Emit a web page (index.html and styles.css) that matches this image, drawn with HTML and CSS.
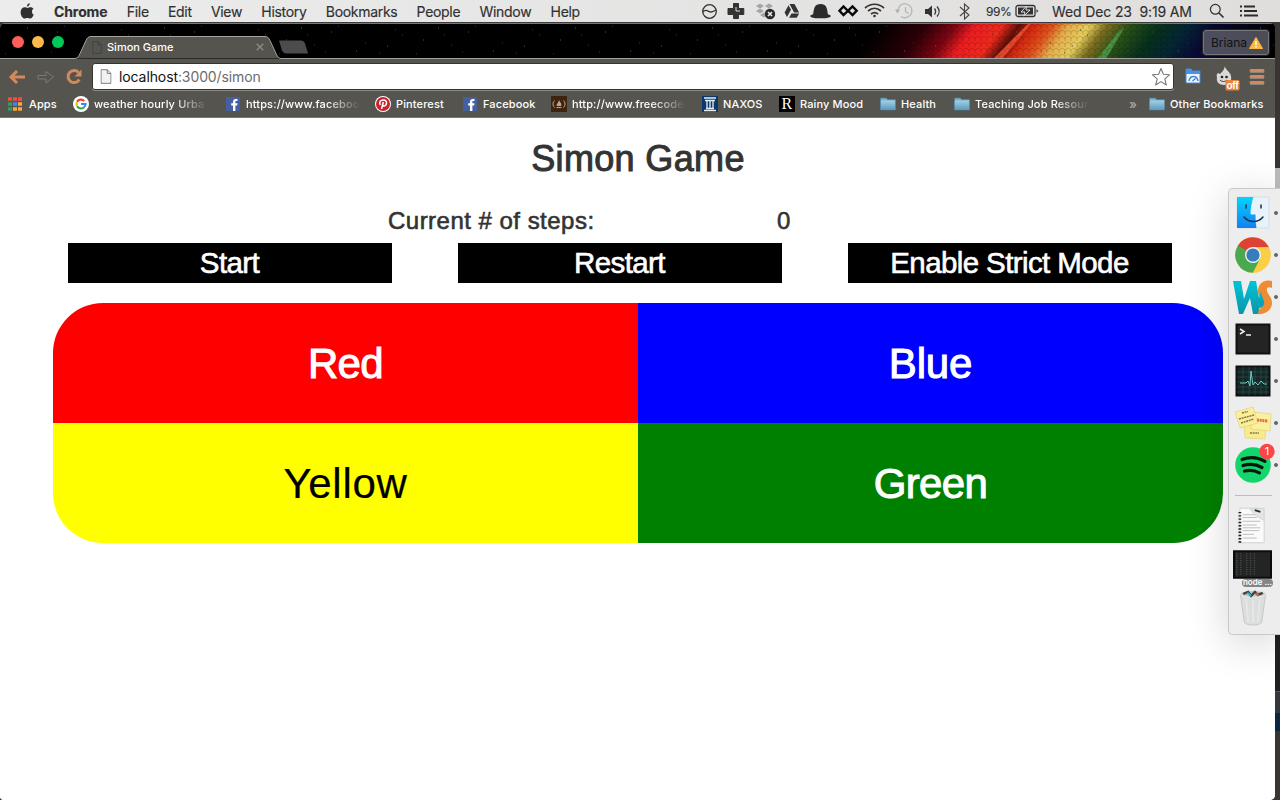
FILE: index.html
```html
<!DOCTYPE html>
<html lang="en">
<head>
<meta charset="utf-8">
<title>Simon Game</title>
<link rel="stylesheet" href="styles.css">
</head>
<body>
<svg width="0" height="0" class="defs">
  <defs>
    <linearGradient id="folderFill" x1="0" y1="0" x2="0" y2="1"><stop offset="0" stop-color="#a5d0e6"/><stop offset="1" stop-color="#5b9abd"/></linearGradient>
    <symbol id="folder" viewBox="0 0 16 16"><path d="M.5 3V2h6l1 1.500h8V14H.5z" fill="#79b0ce" stroke="#477d9c" stroke-width=".6"/><path d="M.8 4.500h14.400v9.200H.8z" fill="url(#folderFill)"/></symbol>
    <symbol id="fb" viewBox="0 0 16 16"><rect x="1" y="1" width="14" height="14" fill="#4460a0"/><path d="M8 15V9.500H6.200V7.300H8V5.800C8 3.900 9.200 3 10.800 3h1.700v2.100h-1.200c-.7 0-.9.400-.9 1v1.200h2.100l-.3 2.200h-1.800V15z" fill="#fff"/></symbol>
    <symbol id="page" viewBox="0 0 12 16"><path d="M.7.700h6.600l4 4v10.600H.7z"/><path d="M7.300.700v4h4" fill="none"/></symbol>
  </defs>
</svg>

<header class="menubar">
  <svg class="apple" width="14" height="16" viewBox="0 0 14 16"><path d="M9.800.200c.1 1.800-1.300 3.300-2.900 3.300C6.700 1.900 8.200.400 9.800.200zM12 8.400c0-1.600 1.200-2.400 1.500-2.600-1-1.400-2.300-1.600-2.900-1.600-1.300 0-2.300.7-3 .7S5.900 4.200 4.900 4.200C2.600 4.300.6 6 .6 9.200c0 3.300 2.300 6.400 3.900 6.400 1.100 0 1.500-.7 2.900-.7s1.700.7 2.800.7c1.500 0 2.900-2.200 3.500-4-1.200-.5-1.700-1.700-1.700-3.200z"/></svg>
  <nav class="menus"><b>Chrome</b><span>File</span><span>Edit</span><span>View</span><span>History</span><span>Bookmarks</span><span>People</span><span>Window</span><span>Help</span></nav>
  <svg class="status" width="280" height="22" viewBox="0 0 280 22">
    <g fill="none" stroke="#333" stroke-width="1.300">
      <circle cx="9.500" cy="11.500" r="6.800"/><path d="M3 12c3-4 5 0 8 0 2 0 3-1 5-2"/>
    </g>
    <path d="M33.500 3.500h5v5h5.300v6h-5.300V18.500h-5v-4H28v-6h5.500z" fill="#333" stroke="#333" stroke-linejoin="round"/>
    <path d="M36 7v4h4" stroke="#ddd" fill="none"/>
    <path d="M56 6l4-2.500L64 6l-4 2.500zm9 0l4-2.500L73 6l-4 2.500zm-9 5l4-2.500 4 2.500-4 2.500zm9 0l4-2.500 4 2.500-4 2.500zM60 15l4-2.500 4 2.500-4 2.500z" fill="#a5a5a5"/>
    <circle cx="70" cy="14" r="5.200" fill="#292929"/><path d="M68 12l4 4m0-4l-4 4" stroke="#eee" stroke-width="1.500"/>
    <path d="M89.500 4h5l4.600 8.500h-5zM88.500 5.200l2.500 4.600-4 7.300-2.400-4.600zM91.500 13.500h7.700l-2.500 4.200h-7.600z" fill="#333"/>
    <path d="M110 16c1-1 2.500-1.500 3.200-2 .7-6 1.500-10 7.300-10s6.700 4 7.300 10c.7.500 2.200 1 3.200 2-1.500 2.500-6 2.200-10.500 2.200S111.500 18.500 110 16z" fill="#2b2b2b"/>
    <path d="M147.500 10.500L143.500 6.500 139.500 10.700l4 4.300 9-8.500 4.200 4.200-4.200 4.300-4-4M147.500 10.500l-.8-.8M148.500 11l.8.800" fill="none" stroke="#080808" stroke-width="2.400"/>
    <g fill="none" stroke="#333" stroke-width="1.700"><path d="M165 8c5.500-5 13.500-5 19 0M168 11c4-3.500 9-3.500 13 0M171 14c2.400-2 4.700-2 7 0"/></g><circle cx="174.500" cy="16" r="1.300" fill="#333"/>
    <g fill="none" stroke="#b7b7b7" stroke-width="1.300"><path d="M198 11.500a7 7 0 1 1 3 5M205.500 7v4.500l3 2"/></g><path d="M195 9.500h5l-2.500 4z" fill="#b0b0b0"/>
    <path d="M225 9h3l4-3.500v12L228 14h-3z" fill="#333"/><path d="M234.500 8.500c1.500 2 1.500 4 0 6M237 6.500c2.700 3 2.700 7 0 10" stroke="#333" fill="none" stroke-width="1.300"/>
    <path d="M260 7l9 8-4.500 4V4l4.500 4-9 8" fill="none" stroke="#444" stroke-width="1.100"/>
  </svg>
  <span class="percent">99%</span>
  <svg class="battery" width="24" height="14" viewBox="0 0 24 14"><rect x="1" y="1.500" width="19" height="11" rx="2" fill="none" stroke="#333" stroke-width="1.300"/><path d="M3 3.500h15v7H3z" fill="#333"/><path d="M11.500 2L6 8h4l-1.200 4L15 6h-4z" fill="#333" stroke="#ddd"/><path d="M21.500 5v4l1.800-2z" fill="#333"/></svg>
  <span class="clock">Wed Dec 23&nbsp; 9:19 AM</span>
  <svg class="search" width="16" height="16" viewBox="0 0 16 16" fill="none" stroke="#333"><circle cx="6.300" cy="6.300" r="4.900" stroke-width="1.300"/><path d="M10 10l4.500 4.500" stroke-width="1.700"/></svg>
  <svg class="list" width="18" height="12" viewBox="0 0 18 12"><path d="M0 1.500h2M0 6h2M0 10.500h2M4 1.500h11M4 6h13M4 10.500h14" stroke="#2c2c2c" stroke-width="1.800"/></svg>
</header>

<div class="desktop">
  <section class="window">
    <div class="tabstrip">
      <svg class="theme" width="1275" height="36" viewBox="0 0 1275 36">
        <defs>
          <linearGradient id="aurora" gradientUnits="userSpaceOnUse" x1="880" y1="0" x2="1100" y2="160">
            <stop offset="0" stop-color="#000"/><stop offset=".14" stop-color="#2c0007"/><stop offset=".23" stop-color="#7c0512"/><stop offset=".29" stop-color="#ed1c20"/><stop offset=".37" stop-color="#f02a1c"/><stop offset=".42" stop-color="#5e0f08"/><stop offset=".46" stop-color="#d5250e"/><stop offset=".52" stop-color="#e0531d"/><stop offset=".57" stop-color="#e6b04c"/><stop offset=".63" stop-color="#e4cc5c"/><stop offset=".68" stop-color="#7d6e1e"/><stop offset=".75" stop-color="#2a5018"/><stop offset=".84" stop-color="#05301c"/><stop offset=".92" stop-color="#042634"/><stop offset="1" stop-color="#080a38"/><stop offset="1.000" stop-color="#080a38"/>
          </linearGradient>
          <linearGradient id="night"><stop stop-color="#000" stop-opacity="0"/><stop offset="1" stop-color="#000"/></linearGradient>
          <pattern id="hex" width="6" height="6" patternUnits="userSpaceOnUse"><path d="M0 1l3 2 3-2M3 3v3" fill="none" stroke="#000" stroke-opacity=".25" stroke-width=".7"/></pattern>
          <pattern id="stars" width="137" height="35" patternUnits="userSpaceOnUse"><path d="M12 17h1M27 5h1M57 9h1M82 28h1M113 23h1" stroke="#555"/><path d="M5 31h1M33 12h1M51 29h1M64 3h1M91 20h1M105 30h1M121 7h1M40 22h1M128 12h1" stroke="#333"/></pattern>
        </defs>
        <rect width="1275" height="36" fill="#000"/>
        <path d="M850 0h425v36H850z" fill="url(#aurora)"/>
        <path d="M1195 0h80v36h-80z" fill="url(#night)"/>
        <path d="M993 36l36-36h3l-30 36z" fill="#ff5436" opacity=".8"/>
        <path d="M1097 36l22-28 5-3-18 31z" fill="#4ca54b" opacity=".75"/>
        <path d="M860 0h370v36H860z" fill="url(#hex)"/>
        <rect width="1275" height="36" fill="url(#stars)"/>
        <path d="M0 .5h1275" stroke="#777"/>
        <circle cx="18" cy="19" r="6" fill="#ff5f58"/><circle cx="38" cy="19" r="6" fill="#ffb94b"/><circle cx="58" cy="19" r="6" fill="#00c957"/>
        <path d="M0 35.500h75c3 0 4-3 5-5l6-13c1-2 2-4 5-4h174c3 0 4 2 5 4l6 13c1 2 2 5 5 5h994" fill="#55544e" stroke="#a3a29d"/>
        <path d="M279 17.500h22c2 0 3 1 4 3l3 10h-21c-3 0-4-1-5-3z" fill="#4c4c4c"/>
      </svg>
      <div class="tab">
        <svg width="10" height="13" viewBox="0 0 12 16" fill="none" stroke="#403f3a"><use href="#page"/></svg>
        <span>Simon Game</span>
        <svg width="8" height="8" viewBox="0 0 8 8"><path d="M.7.700l6.600 6.600m0-6.600L.7 7.300" stroke="#8b8a86" stroke-width="1.400"/></svg>
      </div>
      <div class="profile"><span>Briana</span><svg width="14" height="12" viewBox="0 0 14 12"><path d="M7 .5L13.500 11.500H.5z" fill="#ffb83d" stroke="#ffb83d" stroke-linejoin="round"/><path d="M7 4v4M7 9v1.500" stroke="#fff" stroke-width="1.400"/></svg></div>
    </div>
    <div class="toolbar">
      <svg width="76" height="20" viewBox="0 0 76 20">
        <path d="M9 4L3 10l6 6M4 10h13" fill="none" stroke="#d28a5a" stroke-width="3"/>
        <path d="M30 8.500h8V4.500l7.500 5.500-7.500 6v-4h-8z" fill="none" stroke="#7b7a76" stroke-width="1"/>
        <path d="M70.500 5.500a6 6 0 1 0 .8 7" fill="none" stroke="#d28a5a" stroke-width="3"/><path d="M73.500 2.500v7h-7z" fill="#d28a5a"/>
      </svg>
      <div class="omnibox">
        <svg width="12" height="15" viewBox="0 0 12 16" fill="#f1f1f1" stroke="#777"><use href="#page"/></svg>
        <span class="url"><em>localhost</em>:3000/simon</span>
        <svg width="20" height="20" viewBox="0 0 20 20"><path d="M10 1.500l2.400 5.800 6.100.5-4.700 4 1.500 6.200-5.300-3.400L4.700 18l1.500-6.200-4.700-4 6.100-.5z" fill="#fff" stroke="#777" stroke-width="1.100" stroke-linejoin="round"/></svg>
      </div>
      <svg class="extensions" width="90" height="28" viewBox="0 0 90 28">
        <path d="M1 6h5l1 2h8v12H1z" fill="#f0f5fa" stroke="#4188da"/><path d="M1 6h5l1 2h8v3H1z" fill="#4a91e6"/><path d="M4 18c1-6 8-6 9 0M7.500 18l3-2.500" fill="none" stroke="#4387d4" stroke-width="1.500"/>
        <path d="M40 3c0 4 5 5 6 10 1 6-2 9-7 9s-8-3-7-8c-1-2 0-3 1-4l2 1c3-3 4-4 5-8z" fill="#d9d9d7"/><circle cx="37" cy="14" r="1.300" fill="#222"/><circle cx="41.500" cy="14" r="1.300" fill="#222"/><path d="M35 17c2 2 5 2 7 0" fill="none" stroke="#333"/>
        <rect x="40.500" y="17" width="14" height="10.500" rx="1.500" fill="#e8833a"/><text x="41.500" y="26" class="badge">off</text>
        <path d="M66 7.500h12M66 13.500h12M66 19.500h12" stroke="#d28a5a" stroke-width="3" stroke-linecap="round"/><path d="M65 9.500h14M65 15.500h14M65 21.500h14" stroke="#888580"/>
      </svg>
    </div>
    <nav class="bookmarks">
      <a><svg width="14" height="14" viewBox="0 0 14 14"><path d="M0 2h4M5 2h4M10 2h4" stroke="#f44b43" stroke-width="3.500"/><path d="M0 7h4" stroke="#29a05b" stroke-width="3.500"/><path d="M5 7h4" stroke="#3889ef" stroke-width="3.500"/><path d="M10 7h4M10 12h4M5 12h4" stroke="#f8a83d" stroke-width="3.500"/><path d="M0 12h4" stroke="#29a05b" stroke-width="3.500"/></svg><span>Apps</span></a>
      <a><svg width="16" height="16" viewBox="0 0 16 16" fill="none" stroke-width="2.200"><circle cx="8" cy="8" r="8" fill="#fff"/><path d="M11.200 4.900A4.500 4.500 0 0 0 4.100 5.800" stroke="#ea4335"/><path d="M4.100 5.800a4.500 4.500 0 0 0 0 4.400" stroke="#fbbc05"/><path d="M4.100 10.200a4.500 4.500 0 0 0 6.700 1.300" stroke="#34a853"/><path d="M10.800 11.500A4.500 4.500 0 0 0 12.500 8H8" stroke="#4285f4"/></svg><span class="fade">weather hourly Urba</span></a>
      <a><svg width="16" height="16"><use href="#fb"/></svg><span class="fade">https://www.faceboo</span></a>
      <a><svg width="16" height="16" viewBox="0 0 16 16"><circle cx="8" cy="8" r="8" fill="#fff"/><circle cx="8" cy="8" r="7" fill="#c8232c"/><path d="M5.300 9C3.600 5.800 5.800 3.900 8.200 3.900c2.400 0 3.600 1.500 3.300 3.400-.4 2.600-2.800 3.300-3.800 2M8.300 6L6.500 13" fill="none" stroke="#fff" stroke-width="1.500"/></svg><span>Pinterest</span></a>
      <a><svg width="16" height="16"><use href="#fb"/></svg><span>Facebook</span></a>
      <a><svg width="16" height="16" viewBox="0 0 16 16"><path d="M0 0h16v16H0z" fill="#40230f"/><path d="M3.500 4.500c-2 2-2 5 0 7M12.500 4.500c2 2 2 5 0 7M5.500 11.500h5" fill="none" stroke="#b9a794"/><path d="M8 4c.5 2 3 3 2.200 6H5.800C5 8 7.500 7 8 4z" fill="#b9a794"/></svg><span class="fade">http://www.freecodec</span></a>
      <a><svg width="16" height="16" viewBox="0 0 16 16"><path d="M0 0h16v16H0z" fill="#0c396c"/><path d="M2 2h12M3 4.500h10M2 14.500h12M4 12.500h8M5 5v7M8 5v7M11 5v7" stroke="#e6eef5" stroke-width="1.300"/></svg><span>NAXOS</span></a>
      <a><span class="rainy-icon">R</span><span>Rainy Mood</span></a>
      <a><svg width="16" height="16"><use href="#folder"/></svg><span>Health</span></a>
      <a><svg width="16" height="16"><use href="#folder"/></svg><span class="fade">Teaching Job Resour</span></a>
      <a class="more">»</a>
      <a><svg width="16" height="16"><use href="#folder"/></svg><span>Other Bookmarks</span></a>
    </nav>
    <main class="page">
      <h1>Simon Game</h1>
      <div class="steps"><span>Current # of steps:</span><span>0</span></div>
      <div class="controls"><button>Start</button><button>Restart</button><button>Enable Strict Mode</button></div>
      <div class="board"><div class="pad red">Red</div><div class="pad blue">Blue</div><div class="pad yellow">Yellow</div><div class="pad green">Green</div></div>
    </main>
  </section>
  <div class="behind"><i class="grey"></i><i class="black"></i><i class="slate"></i><i class="navy"></i></div>

  <aside class="dock">
    <svg class="running" viewBox="0 0 44 36"><defs><linearGradient id="finder" x1="0" y1="0" x2="0" y2="1"><stop stop-color="#04d4fd"/><stop offset="1" stop-color="#1480f0"/></linearGradient></defs><rect x="2" y="2" width="32" height="31" rx="1" fill="#e8f2fb" stroke="#c5d0da" stroke-width=".6"/><path d="M2 2h17c-2 6-3 11-3 17h5c0 5 0 9 1 14H2z" fill="url(#finder)"/><path d="M19 2c-2 6-3 11-3 17h5c0 5 0 9 1 14" fill="none" stroke="#fff" stroke-width=".8"/><path d="M11 10v3M26 10v3M9 22c5 6 14 6 19 0" stroke="#17304a" stroke-width="1.500" fill="none" stroke-linecap="round"/></svg>
    <svg class="running" viewBox="0 0 44 36"><circle cx="18" cy="18" r="17.800" fill="#fbcf45"/><path d="M18 18L2.600 9A17.800 17.800 0 0 1 33.500 9.500L34 10.500H18z" fill="#dc4335"/><path d="M18 18L3 8.500A17.800 17.800 0 0 0 18 35.800L25.500 22z" fill="#4aa850"/><path d="M18 10.300h15.800A17.800 17.800 0 0 1 18 35.800L25 22z" fill="#fbcf45"/><circle cx="18" cy="18" r="8" fill="#f2f2f2"/><circle cx="18" cy="18" r="6.600" fill="#367dbb"/></svg>
    <svg class="running" viewBox="0 0 44 36"><defs><linearGradient id="ws" x1="0" y1="0" x2="0" y2="1"><stop stop-color="#00c4d8"/><stop offset="1" stop-color="#0c94aa"/></linearGradient></defs><path d="M37 2v7c-4-2-6 0-5 3 1 4 5 6 5 12 0 7-7 12-15 11l-3-5c5 1 9-1 9-5 0-4-5-7-5-13 0-8 7-12 14-10z" fill="#ee8b35"/><path d="M-2 2h8l3 18 6-18h6l3 17 2-7c0 7 4 8 3 13-1 3-3 4-5 4l-1 6h-5l-3-16-7 16H4z" fill="url(#ws)"/></svg>
    <svg class="running" viewBox="0 0 44 36"><rect x="1.500" y="3.500" width="33" height="29" fill="#242424" stroke="#101010" stroke-width="2"/><path d="M5 8l4 2.500L5 13M11 14h5" stroke="#eee" stroke-width="1.500" fill="none"/></svg>
    <svg class="running" viewBox="0 0 44 36"><rect x="1.500" y="3.500" width="33" height="29" fill="#142625" stroke="#101010" stroke-width="2"/><path d="M8 4v28M14 4v28M20 4v28M26 4v28M31 4v28M2 9h32M2 14h32M2 19h32M2 24h32M2 29h32" stroke="#28504a" stroke-width=".7"/><path d="M5 20h6l2-2 2 5 1-15 2 14 2-3 3 3 3-4 3 3h3" stroke="#74c8bd" stroke-width="1" fill="none"/></svg>
    <svg class="running" viewBox="0 0 44 36"><path d="M9 20h22l-1 14-20-1z" fill="#f8ea8d" stroke="#d9c968" stroke-width=".5"/><path d="M17 7l19 2-1 17-19-2z" fill="#fbf09d" stroke="#d9c968" stroke-width=".5"/><path d="M0 7l18-5 5 16-18 5z" fill="#fbee96" stroke="#d9c968" stroke-width=".5"/><path d="M7 8l6-1.500M4 14l15-4M6 18l13-4M15 28h9" stroke="#827946" stroke-width="1.500" stroke-dasharray="2 .7"/><path d="M22 15l11 1" stroke="#e66b49" stroke-width="3" stroke-dasharray="2 .7"/></svg>
    <svg class="running" viewBox="0 0 44 36"><circle cx="18" cy="18" r="17.800" fill="#12d66b"/><path d="M7 12.500c8-3 16-2 23 1.800M8 18.500c7-2 13-1.500 19 2M9.500 24c6-1.500 10-1 15 1.800" fill="none" stroke="#06180e" stroke-width="3.200" stroke-linecap="round"/><circle cx="32" cy="4.500" r="7.700" fill="#fb4549"/><text x="29.800" y="8.300" class="count">1</text></svg>
    <hr>
    <svg class="document" viewBox="0 0 30 38"><path d="M2 1h20l6 12v25H2z" fill="#fafafa" stroke="#d0d0d0"/><path d="M2 5v33" stroke="#222" stroke-width="3" stroke-dasharray="1.500 2"/><path d="M5 8h14M5 11h15M5 15h19M5 19h15M5 22h19M5 25h18M5 29h12M5 33h15" stroke="#aaa" stroke-width=".8"/><path d="M13 2c6 8 7 8 15 12V1z" fill="#e4e4e4" stroke="#bbb" stroke-width=".5"/><path d="M18 3l6 2" stroke="#173927" stroke-width="2"/></svg>
    <div class="minimized"><svg width="39" height="29" viewBox="0 0 40 29"><path d="M1 1h38v27H1z" fill="#242424" stroke="#0b0b0b" stroke-width="2"/><path d="M4 3v22M8 3v22M14 3v22M18 3v22M22 3v22" stroke="#45524a" stroke-width="1.500" stroke-dasharray="1 1.300"/></svg><span>node ...</span></div>
    <svg class="trash" viewBox="0 0 28 38"><path d="M1 5h26l-4 29c-1 4-17 4-18 0z" fill="#dcdddd" stroke="#c5c6c7"/><path d="M7 10l2 24M14 11v24M21 10l-2 24" stroke="#e6e6e6" stroke-width="2"/><ellipse cx="14" cy="5" rx="13" ry="3.500" fill="#c3c8c7" stroke="#eee"/><path d="M4 5l5-2 3 4 4-4 3 3 5-2" stroke="#3d4546" stroke-width="2.500" fill="none"/><path d="M8 4l4 3" stroke="#36b6c3" stroke-width="2"/><path d="M17 4l3 3" stroke="#cd6948" stroke-width="2"/></svg>
  </aside>
</div>
</body>
</html>
```
FILE: styles.css
```css
* { box-sizing: border-box; }
body { margin: 0; width: 1280px; height: 800px; overflow: hidden; display: flex; flex-direction: column; background: #3a3432; font-family: Inter, sans-serif; }
svg { display: block; flex: none; overflow: visible; }
.defs { position: absolute; }

.menubar { height: 23px; flex: none; display: flex; align-items: center; padding-left: 20px; background: linear-gradient(90deg, #ececec, #dfdedd); border-bottom: 1px solid #3c3c3c; font-size: 14px; color: #303030; white-space: nowrap; -webkit-text-stroke: .15px currentColor; }
.apple { fill: #303030; margin-right: 20px; }
.menus { display: flex; gap: 19.2px; width: 646px; letter-spacing: -.3px; }
.menus b { font-weight: 700; letter-spacing: -.1px; }
.percent { width: 29px; font-size: 12px; letter-spacing: -.5px; margin-left: 6px; }
.battery { margin-right: 13px; }
.clock { width: 157px; letter-spacing: -.13px; }
.list { margin-left: 15px; }

.desktop { position: relative; flex: 1; display: flex; }
.window { width: 1275px; height: 777px; display: flex; flex-direction: column; overflow: hidden; background: #fff; border-radius: 5px 5px 5px 4px; }
.tabstrip { position: relative; height: 36px; flex: none; display: flex; justify-content: space-between; }
.theme { position: absolute; left: 0; top: 0; }
.tab { position: relative; width: 275px; padding: 12px 11px 0 92px; display: flex; align-items: center; gap: 5px; height: 36px; color: #fff; font-size: 11px; font-weight: 500; }
.tab span { flex: 1; }
.profile { position: relative; width: 66px; height: 25px; margin: 7px 6px 0 0; padding: 0 5px 0 7px; display: flex; align-items: center; justify-content: space-between; border: 1px solid #777; border-radius: 3px; background: rgba(95,95,108,.8); box-shadow: 0 0 0 1px #222; font-size: 12px; color: #111; }

.toolbar { height: 35px; flex: none; display: flex; align-items: center; padding-left: 8px; background: #55544e; }
.omnibox { width: 1083px; height: 27px; margin-left: 8px; padding: 0 2px 0 7px; display: flex; align-items: center; background: #fff; border: 1px solid #35342f; border-radius: 3px; box-shadow: 0 1px 0 #8b8a84; }
.url { flex: 1; margin-left: 7px; font-size: 14px; color: #6c6c6c; letter-spacing: -.1px; }
.url em { font-style: normal; color: #111; }
.extensions { margin-left: 11px; }
.badge { font: 700 10px "Liberation Sans", sans-serif; fill: #fff; letter-spacing: -.3px; }

.bookmarks { height: 24px; flex: none; display: grid; grid-template-columns: 65px 152px 150px 87px 89px 151px 77px 101px 74px 175px 20px 120px; align-items: center; padding: 0 0 4px 8px; background: #55544e; border-bottom: 1px solid #777671; color: #fff; font-size: 11px; font-weight: 500; letter-spacing: .13px; white-space: nowrap; }
.bookmarks a { display: flex; align-items: center; gap: 5px; }
.bookmarks a:first-child { gap: 7px; }
.fade { width: 114px; -webkit-mask-image: linear-gradient(90deg, #000 70%, transparent); mask-image: linear-gradient(90deg, #000 70%, transparent); }
.rainy-icon { width: 16px; height: 16px; background: #000; font: 16px/16px "Liberation Serif", serif; text-align: center; }
.bookmarks .more { color: #aaa; font-size: 13px; }

.page { flex: 1; display: flex; flex-direction: column; padding: 20px 52px 0 53px; background: #fff; color: #333; font-family: "Liberation Sans", sans-serif; }
h1 { margin: 0; height: 40px; line-height: 42px; font-size: 36px; font-weight: 400; text-align: center; letter-spacing: .35px; -webkit-text-stroke: 1px #333; }
.steps { display: flex; height: 65px; padding: 29px 0 0 335px; font-size: 24px; line-height: 28px; letter-spacing: .48px; -webkit-text-stroke: .6px #333; }
.steps span:first-child { width: 389px; }
.controls { display: flex; gap: 66px; padding-left: 15px; margin-bottom: 20px; }
button { width: 324px; height: 40px; padding: 0 1px 0 0; border: 0; background: #000; color: #fff; font: 29.5px/40px "Liberation Sans", sans-serif; letter-spacing: -.6px; -webkit-text-stroke: .6px #fff; }
.board { display: grid; grid-template-columns: 585px 585px; grid-auto-rows: 120px; width: 1170px; border-radius: 50px; overflow: hidden; }
.pad { line-height: 122px; text-align: center; color: #fff; font-size: 42px; letter-spacing: -.6px; -webkit-text-stroke: 1px currentColor; }
.red { background: #f00; }
.blue { background: #00f; letter-spacing: -.2px; }
.yellow { background: #ff0; color: #000; letter-spacing: .7px; -webkit-text-stroke: .2px currentColor; }
.green { background: #008000; }

.behind { width: 5px; height: 777px; display: flex; flex-direction: column; padding-top: 145px; }
.grey { height: 400px; background: #bbb; }
.black { height: 123px; background: #20211e; }
.slate { height: 22px; background: #34373b; border-top: 1px solid #50565a; }
.navy { height: 18px; background: #0a2741; }

.dock { position: absolute; right: 0; top: 165px; width: 52px; height: 447px; padding: 6px 0 0 6px; display: flex; flex-direction: column; background: #eeedee; border: 1px solid #c9c9ca; border-right: 0; border-radius: 5px 0 0 5px; box-shadow: 0 8px 40px rgba(0,0,0,.17); }
.running { width: 44px; height: 36px; margin-bottom: 6px; background: radial-gradient(circle at 41px 18px, #666 1.500px, transparent 2.300px); }
.count { font: 11px Inter, sans-serif; fill: #fff; }
hr { width: 37px; margin: 6px 0 10px; border: 0; border-top: 1px solid #bdbdbf; }
.document { width: 28px; height: 38px; margin: 0 0 6px 3px; }
.minimized { width: 40px; height: 37px; margin-left: -2px; }
.minimized span { display: block; width: 31px; height: 8px; margin: 0 0 0 9px; border-radius: 4px; background: #858585; color: #fff; font-size: 8px; line-height: 7px; font-weight: 600; text-align: center; }
.trash { width: 28px; height: 37px; margin: 2px 0 0 4px; }
```
